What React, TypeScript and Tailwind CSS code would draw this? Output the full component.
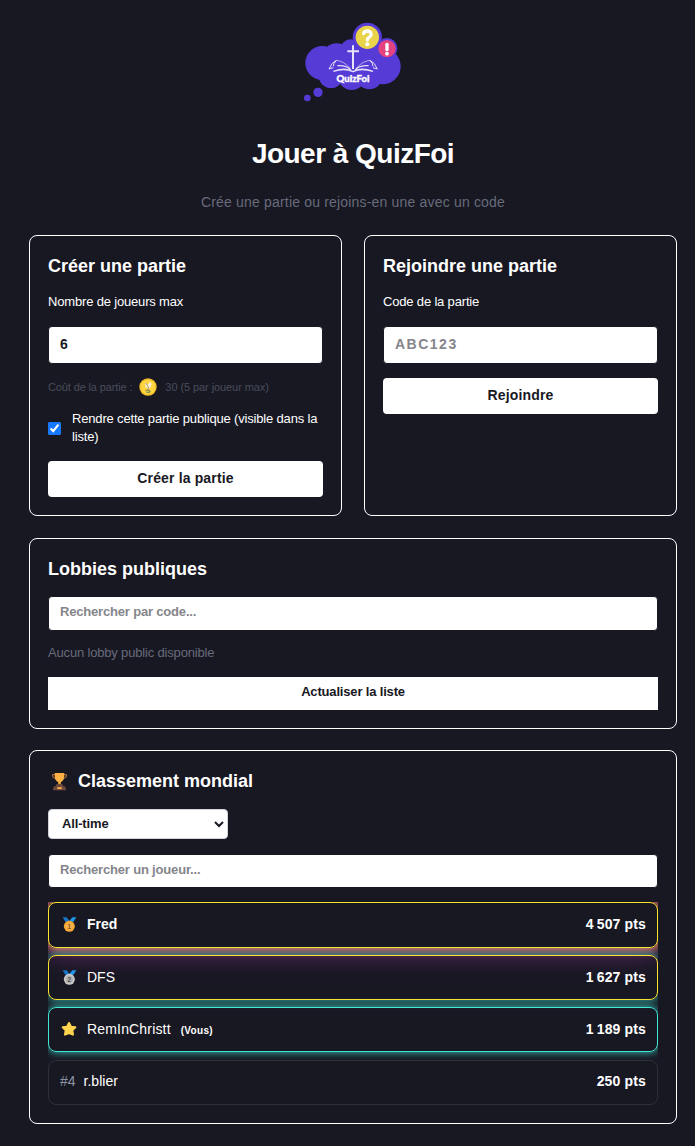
import React from "react";

type Player = {
  rank: number;
  name: string;
  points: string;
  bold?: boolean;
  you?: boolean;
  row: string;
};

const players: Player[] = [
  {
    rank: 1,
    name: "Fred",
    points: "4\u202f507 pts",
    bold: true,
    row: "h-[46px] mb-[7px] pb-[2px] border-[#fde32f] shadow-[0_0_8px_2px_rgba(255,150,100,0.9),0_0_28px_2px_rgba(200,60,200,0.6)]",
  },
  {
    rank: 2,
    name: "DFS",
    points: "1\u202f627 pts",
    row: "h-[45px] mb-[7px] border-[#fde32f] shadow-[0_0_8px_1px_rgba(64,224,208,0.65)]",
  },
  {
    rank: 3,
    name: "RemInChristt",
    points: "1\u202f189 pts",
    you: true,
    row: "h-[45px] mb-2 border-[#40e8d4] shadow-[0_0_8px_rgba(64,224,208,0.9)]",
  },
  {
    rank: 4,
    name: "r.blier",
    points: "250 pts",
    row: "h-[45px] pb-[2px] border-[#2e2e35]",
  },
];

function Logo() {
  return (
    <svg width="125" height="95" viewBox="3 0 375 285" aria-label="QuizFoi">
      <g fill="#563bd6">
        <circle cx="97" cy="144" r="51" />
        <circle cx="140" cy="128" r="43" />
        <circle cx="182" cy="103" r="30" />
        <circle cx="232" cy="67" r="44" />
        <circle cx="291" cy="100" r="31" />
        <circle cx="278" cy="154" r="54" />
        <circle cx="123" cy="182" r="37" />
        <circle cx="185" cy="184" r="41" />
        <circle cx="238" cy="184" r="39" />
        <rect x="120" y="90" width="155" height="110" />
        <circle cx="84" cy="232" r="14" />
        <circle cx="52" cy="249" r="10" />
      </g>
      <circle cx="232" cy="67" r="35" fill="#e9d34b" />
      <circle cx="291" cy="101" r="26" fill="#e3437f" />
      <path
        d="M221 56Q222 48 233 48Q244 49 243 59Q242 65 237 67Q232 70 232 75"
        fill="none"
        stroke="#fff"
        strokeWidth="10"
        strokeLinecap="round"
      />
      <circle cx="232" cy="88" r="6" fill="#fff" />
      <path d="M291 88V104" stroke="#fff" strokeWidth="10" strokeLinecap="round" />
      <circle cx="291" cy="116" r="5.5" fill="#fff" />
      <path d="M189 91V162M172 109H207" stroke="#e6e2fa" strokeWidth="6" />
      <g fill="none" stroke="#e6e2fa" strokeWidth="4">
        <path d="M189 170Q169 155 130 169Q165 158 189 170Q211 155 249 169Q213 158 189 170" />
        <path d="M182 165Q170 150 142 152" />
        <path d="M196 165Q208 150 236 152" />
        <path d="M130 158L117 162Q125 142 139 136Q130 145 130 154" strokeWidth="3" />
        <path d="M249 158L262 162Q254 142 240 136Q249 145 249 154" strokeWidth="3" />
        <path d="M139 136Q163 139 180 160M240 136Q216 139 199 160" strokeWidth="2" />
      </g>
      <text
        x="189"
        y="200"
        fill="#fff"
        stroke="#fff"
        strokeWidth="1"
        fontFamily="Lato, sans-serif"
        fontWeight="900"
        fontSize="27"
        textAnchor="middle"
        textLength="99"
        lengthAdjust="spacingAndGlyphs"
      >
        QuizFoi
      </text>
    </svg>
  );
}

function Trophy() {
  return (
    <svg width="17" height="19" viewBox="0 0 54 60" className="ml-[3px] mr-px">
      <path
        d="M14 8H7Q4 8 5 13Q7 20 17 22M40 8H47Q50 8 49 13Q47 20 37 22"
        fill="none"
        stroke="#a86d38"
        strokeWidth="4"
      />
      <path d="M12 3H42V14Q41 28 31 32V40H23V32Q13 28 12 14Z" fill="#fbb144" />
      <path d="M18 38H36L39 45H45L48 58H6L9 45H15Z" fill="#70493d" />
      <rect x="20" y="48" width="14" height="6" fill="#fbb144" />
    </svg>
  );
}

function Medal({ rank }: { rank: number }) {
  const gold = rank === 1;
  return (
    <svg width="15" height="15" viewBox="0 0 45 45">
      <path d="M2 1H14L25 15L16 20L8 11Z" fill="#1976c5" />
      <path d="M31 1H43L36 12L26 20L20 14Z" fill="#2196e8" />
      <circle cx="22" cy="28" r="16.5" fill={gold ? "#fba72d" : "#c9c9c9"} />
      <circle cx="22" cy="28" r="11" fill={gold ? "#f5b350" : "#b0b0b0"} />
      <text
        x="22"
        y="35"
        textAnchor="middle"
        fontFamily="Liberation Sans, sans-serif"
        fontWeight="700"
        fontSize="19"
        fill={gold ? "#8a5014" : "#505050"}
      >
        {rank}
      </text>
    </svg>
  );
}

function Star() {
  return (
    <svg width="16" height="16" viewBox="0 0 48 48" className="mb-px">
      <path
        d="M24 6L30 17L43 19L34 28L36 41L24 36L12 41L14 28L5 19L18 17Z"
        fill="#ffd54f"
        stroke="#ffd54f"
        strokeWidth="6"
        strokeLinejoin="round"
      />
    </svg>
  );
}

function Coin() {
  return (
    <svg width="18" height="18" viewBox="0 0 54 54" className="ml-[7px] mr-2">
      <circle cx="27" cy="27" r="26" fill="#f1bd2c" />
      <circle cx="27" cy="27" r="22" fill="#ffd541" />
      <path d="M17 13L26 20L33 12L38 17L35 27L29 32L20 27Z" fill="#f7efdc" />
      <path d="M20 15L28 26L27 39" fill="none" stroke="#b29a5a" strokeWidth="3" />
      <path d="M19 39L27 36L35 41M22 43H33" fill="none" stroke="#84904f" strokeWidth="4" />
    </svg>
  );
}

const card = "rounded-lg border border-white px-[18px]";
const title = "text-[18px] leading-[22px] font-bold";
const label = "mt-[17px] block text-[13px] leading-4 tracking-[-0.17px]";
const field =
  "block w-full rounded-[4px] border border-[#181823] bg-white px-[11px] font-bold text-[#181823] outline-none placeholder:text-[#85858b]";
const button =
  "h-9 w-full rounded-[4px] bg-white pb-[2px] text-[14px] font-bold tracking-[0.15px] text-[#181823]";

export default function App() {
  return (
    <main className="h-[1146px] w-[695px] bg-[#181823] pl-[29px] pr-[18px] pt-[15px] font-['Liberation_Sans',Arial,sans-serif] text-white">
      <header className="flex flex-col items-center">
        <Logo />
        <h1 className="mt-[27px] text-[28px] leading-[34px] font-bold tracking-[-0.52px]">
          Jouer à QuizFoi
        </h1>
        <p className="mt-[21px] text-[14px] leading-5 tracking-[0.18px] text-[#676b7a]">
          Crée une partie ou rejoins-en une avec un code
        </p>
      </header>

      <div className="mt-[23px] grid grid-cols-2 gap-[22px]">
        <section className={`${card} h-[281px] pt-[19px]`}>
          <h2 className={title}>Créer une partie</h2>
          <label className={label}>Nombre de joueurs max</label>
          <input
            className={`${field} mt-4 h-[38px] pb-[2px] text-[14px]`}
            defaultValue="6"
          />
          <div className="mt-[14px] flex h-[18px] items-center text-[11px] tracking-[-0.13px] text-[#484d5b]">
            <span>Coût de la partie :</span>
            <Coin />
            <span className="tracking-[-0.08px]">30 (5 par joueur max)</span>
          </div>
          <label className="mt-[14px] flex items-center gap-[11px] text-[13px] leading-[18px] tracking-[-0.17px]">
            <input
              type="checkbox"
              defaultChecked
              className="m-0 size-[13px] shrink-0 accent-[#1677ff]"
            />
            <span>Rendre cette partie publique (visible dans la liste)</span>
          </label>
          <button className={`${button} mt-[15px]`}>Créer la partie</button>
        </section>

        <section className={`${card} h-[281px] pt-[19px]`}>
          <h2 className={title}>Rejoindre une partie</h2>
          <label className={label}>Code de la partie</label>
          <input
            className={`${field} mt-4 h-[38px] pb-[2px] text-[14px] tracking-[1.5px]`}
            placeholder="ABC123"
          />
          <button className={`${button} mt-[14px]`}>Rejoindre</button>
        </section>
      </div>

      <section className={`${card} mt-[22px] h-[191px] pt-[19px]`}>
        <h2 className={title}>Lobbies publiques</h2>
        <input
          className={`${field} mt-4 h-[35px] pb-[5px] text-[13px] tracking-[-0.18px]`}
          placeholder="Rechercher par code..."
        />
        <p className="mt-3 text-[13px] leading-5 tracking-[-0.17px] text-[#676b7a]">
          Aucun lobby public disponible
        </p>
        <button className="mt-[14px] block h-[33px] w-full bg-white pb-[3px] text-[13px] font-bold tracking-[-0.17px] text-[#181823]">
          Actualiser la liste
        </button>
      </section>

      <section className={`${card} mt-[21px] h-[374px] pt-[19px]`}>
        <h2 className={`${title} flex items-center gap-[9px]`}>
          <Trophy />
          Classement mondial
        </h2>
        <select className="mt-[17px] block h-[30px] w-[180px] rounded-[4px] border border-[#d1d5db] bg-white pb-px pl-[9px] text-[13px] font-bold tracking-[-0.15px] text-[#181823]">
          <option>All-time</option>
        </select>
        <input
          className={`${field} mt-[15px] h-[34px] pb-[4px] text-[13px] tracking-[-0.18px]`}
          placeholder="Rechercher un joueur..."
        />

        {/* Glows are cut off at the list edges */}
        <div className="mt-[14px] overflow-hidden">
          {players.map((p) => (
            <div
              key={p.rank}
              className={`flex items-center justify-between rounded-lg border px-[11px] text-[14px] ${p.row}`}
            >
              <div className="flex items-center">
                {p.rank > 3 ? (
                  <span className="mr-2 text-[#8d95a5]">#{p.rank}</span>
                ) : (
                  <span className="mr-[9px] flex w-[18px] justify-center">
                    {p.you ? <Star /> : <Medal rank={p.rank} />}
                  </span>
                )}
                <span className={p.bold ? "font-bold" : p.you ? "tracking-[0.17px]" : ""}>
                  {p.name}
                </span>
                {p.you && (
                  <span className="ml-[10px] mt-px text-[10px] font-bold tracking-[0.3px]">(Vous)</span>
                )}
              </div>
              <span className="font-bold tracking-[0.15px]">{p.points}</span>
            </div>
          ))}
        </div>
      </section>
    </main>
  );
}
